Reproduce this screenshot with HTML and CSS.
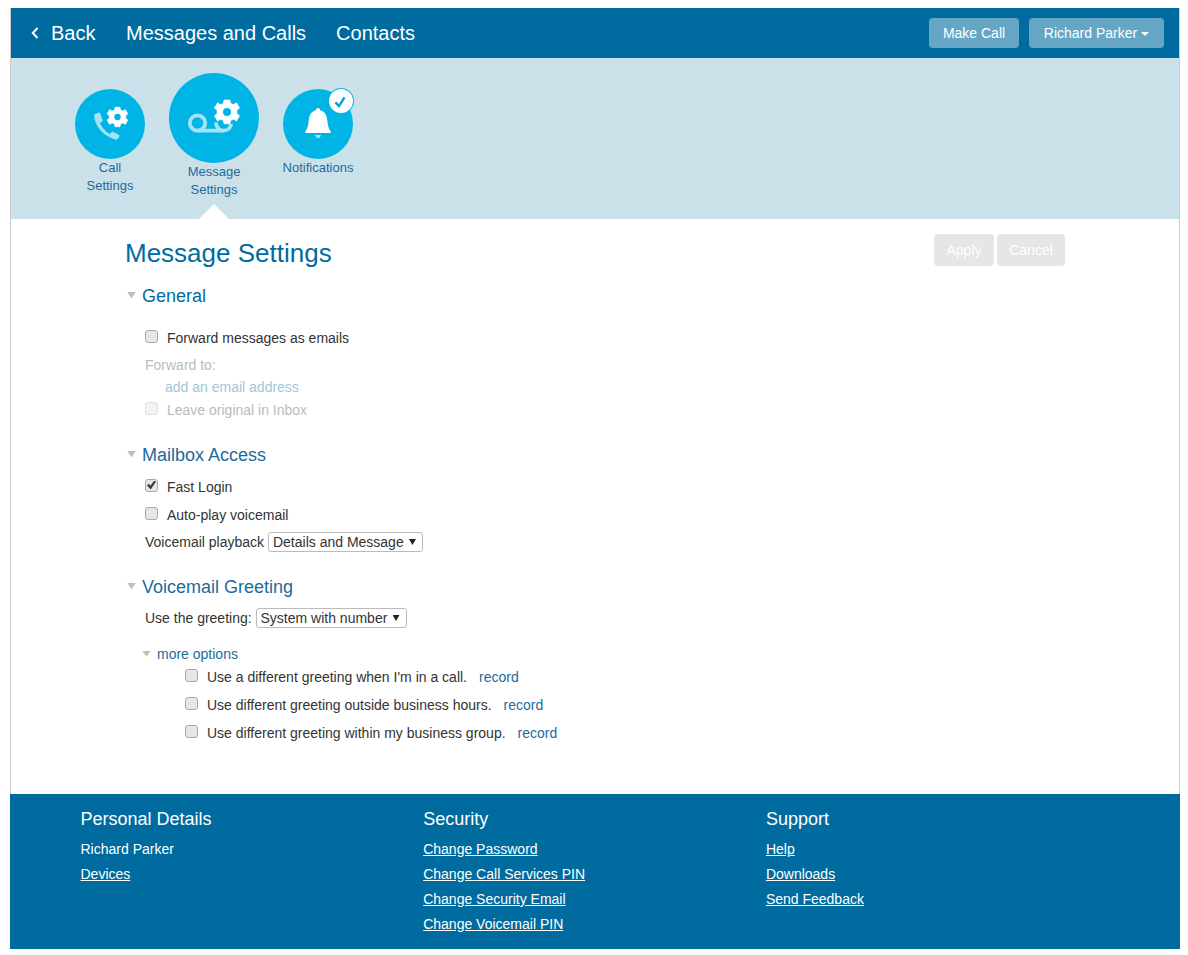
FILE: index.html
```html
<!DOCTYPE html>
<html lang="en">
<head>
<meta charset="utf-8">
<title>Message Settings</title>
<link rel="stylesheet" href="styles.css">
</head>
<body>
<div class="frame">
  <header class="topbar">
    <nav class="topnav">
      <a class="back"><svg class="chev" viewBox="0 0 8 12" width="8" height="12"><path d="M6.500 1 1.800 6l4.700 5" fill="none" stroke="#fff" stroke-width="2"/></svg>Back</a>
      <a class="navlink">Messages and Calls</a>
      <a class="navlink">Contacts</a>
    </nav>
    <div class="topactions">
      <button class="topbtn topbtn-call">Make Call</button>
      <button class="topbtn topbtn-user">Richard Parker<span class="caret"></span></button>
    </div>
  </header>
  <section class="band">
    <div class="tab">
      <div class="circle">
        <svg viewBox="0 0 70 70" width="70" height="70">
          <path d="M19 26c1.500-1.400 3.800-2.300 6-2.500l2.800 8.500-2.900 2.300c2.200 4.500 5.500 8.200 9.800 10.800l2.600-2.600 7.200 3.700c-.3 2.300-1.600 3.900-3.300 4.500C29.500 47.500 19.500 38 19 26z" fill="#a6e2f5"/>
          <g transform="translate(42.500 27.700)"><path class="gear" d="M-2.500-9.500h5l.6 2.800 2.300 1 2.500-1.500 2.500 4.300-2.200 1.900v2.500l2.200 1.900-2.500 4.300-2.500-1.500-2.300 1-.6 2.800h-5l-.6-2.800-2.300-1-2.500 1.500-2.500-4.300 2.200-1.900v-2.500l-2.200-1.900 2.500-4.300 2.500 1.500 2.300-1z"/><circle cx="0" cy=".250" r="3.200" fill="#00b5e6"/></g>
        </svg>
      </div>
      <div class="tablabel">Call<br>Settings</div>
    </div>
    <div class="tab tab-active">
      <div class="circle circle-big">
        <svg viewBox="0 0 90 90" width="90" height="90">
          <g fill="none" stroke="#a6e2f5" stroke-width="3.800"><circle cx="28.500" cy="50" r="7.700"/><path d="M28.500 57.700H54c5 0 8-3 8-7"/><path d="M47 49.500c0 4.500 3 8.200 7 8.200"/></g>
          <g transform="translate(58 39)"><path class="gear" d="M-3-12h6l.7 3.400 2.800 1.200 3-1.900 3.100 5.300-2.700 2.200v3.400l2.700 2.200-3.100 5.300-3-1.900-2.800 1.200-.7 3.400h-6l-.7-3.400-2.800-1.200-3 1.900-3.100-5.300 2.700-2.200v-3.400l-2.700-2.200 3.100-5.300 3 1.900 2.800-1.200z"/><circle cx="0" cy="0" r="4" fill="#00b5e6"/></g>
        </svg>
      </div>
      <div class="tablabel">Message<br>Settings</div>
    </div>
    <div class="tab">
      <div class="circle">
        <svg viewBox="0 0 70 70" width="70" height="70">
          <path d="M35 19c1.200 0 2.100.9 2.100 2.200 4.300 1 6.400 4.300 7 9 .6 4.600.8 8.500 3.400 12 .5.800.4 1.800-.5 1.800H23c-.9 0-1-1-.5-1.800 2.600-3.500 2.800-7.400 3.400-12 .6-4.700 2.700-8 7-9 0-1.300.9-2.200 2.100-2.200z" fill="#fff"/>
          <path d="M32 46h6c-.5 2-1.500 3.200-3 3.200s-2.500-1.200-3-3.200z" fill="#a6e2f5"/>
        </svg>
        <span class="badge"><svg viewBox="0 0 24 24" width="22" height="22"><path d="M6 13.500 9.800 17.500 15.800 8" fill="none" stroke="#00a5d9" stroke-width="2.600"/></svg></span>
      </div>
      <div class="tablabel">Notifications</div>
    </div>
  </section>
  <main class="content">
    <div class="titlerow">
      <h1 class="pagetitle">Message Settings</h1>
      <div class="formactions">
        <button class="ghost ghost-apply">Apply</button>
        <button class="ghost ghost-cancel">Cancel</button>
      </div>
    </div>

    <h2 class="sectionhead head-general"><span class="tri"></span>General</h2>
    <div class="group">
      <label class="row row-first"><input type="checkbox" class="cb"><span>Forward messages as emails</span></label>
      <div class="muted forward">Forward to:</div>
      <a class="addmail">add an email address</a>
      <label class="row muted row-leave"><input type="checkbox" class="cb" disabled><span>Leave original in Inbox</span></label>
    </div>

    <h2 class="sectionhead head-mailbox"><span class="tri"></span>Mailbox Access</h2>
    <div class="group">
      <label class="row row-fast"><input type="checkbox" class="cb" checked><span>Fast Login</span></label>
      <label class="row row-next"><input type="checkbox" class="cb"><span>Auto-play voicemail</span></label>
      <div class="selectrow row-play">Voicemail playback <span class="selectwrap"><select class="sel"><option>Details and Message</option></select></span></div>
    </div>

    <h2 class="sectionhead head-greeting"><span class="tri"></span>Voicemail Greeting</h2>
    <div class="group">
      <div class="selectrow row-greet">Use the greeting: <span class="selectwrap"><select class="sel"><option>System with number</option></select></span></div>
      <div class="more"><span class="tri tri-small"></span><a class="link">more options</a></div>
      <div class="options">
        <label class="row row-opt1"><input type="checkbox" class="cb"><span>Use a different greeting when I'm in a call.</span><a class="link record">record</a></label>
        <label class="row row-next"><input type="checkbox" class="cb"><span>Use different greeting outside business hours.</span><a class="link record">record</a></label>
        <label class="row row-next"><input type="checkbox" class="cb"><span>Use different greeting within my business group.</span><a class="link record">record</a></label>
      </div>
    </div>
  </main>
  <footer class="footer">
    <div class="fcol">
      <h3 class="fhead">Personal Details</h3>
      <div class="fitem">Richard Parker</div>
      <a class="fitem flink">Devices</a>
    </div>
    <div class="fcol">
      <h3 class="fhead">Security</h3>
      <a class="fitem flink">Change Password</a>
      <a class="fitem flink">Change Call Services PIN</a>
      <a class="fitem flink">Change Security Email</a>
      <a class="fitem flink">Change Voicemail PIN</a>
    </div>
    <div class="fcol">
      <h3 class="fhead">Support</h3>
      <a class="fitem flink">Help</a>
      <a class="fitem flink">Downloads</a>
      <a class="fitem flink">Send Feedback</a>
    </div>
  </footer>
</div>
</body>
</html>
```
FILE: styles.css
```css
* { box-sizing: border-box; }
html, body { margin: 0; padding: 0; background: #fff; }
body {
  padding: 8px 8px 6px 10px;
  font-family: "Liberation Sans", Arial, sans-serif;
  font-size: 14px;
  line-height: 20px;
  color: #333;
}
.frame {
  width: 1170px;
  height: 941px;
  border-left: 1px solid #ccc;
  border-right: 1px solid #ccc;
  display: flex;
  flex-direction: column;
}
.topbar {
  height: 50px;
  background: #006b9f;
  display: flex;
  justify-content: space-between;
  align-items: center;
  padding: 0 15px 0 20px;
  flex: none;
}
.topnav { display: flex; align-items: center; color: #fff; font-size: 20px; }
.back { display: flex; align-items: center; width: 95px; font-size: 20px; }
.chev { margin-right: 12px; margin-top: -1px; }
.navlink { margin-right: 30px; }
.topactions { display: flex; gap: 10px; }
.topbtn {
  height: 30px;
  padding: 0;
  border: 0;
  border-radius: 4px;
  background: #66a6c5;
  color: #fff;
  font: 14px/20px "Liberation Sans", Arial, sans-serif;
}
.topbtn-call { width: 90px; }
.topbtn-user { width: 135px; }
.caret {
  display: inline-block;
  margin-left: 4px;
  vertical-align: middle;
  border-top: 4px solid #fff;
  border-left: 4px solid transparent;
  border-right: 4px solid transparent;
}
.band {
  height: 161px;
  background: #cbe1e9;
  position: relative;
  display: flex;
  align-items: flex-start;
  padding-left: 64px;
  flex: none;
}
.tab {
  display: flex;
  flex-direction: column;
  align-items: center;
  width: 70px;
  margin-top: 31px;
  text-align: center;
  color: #1d6b9c;
  font-size: 13px;
  line-height: 18px;
}
.tab-active {
  width: 90px;
  margin: 15px 24px 0 24px;
  position: relative;
  height: 146px;
}
.tab-active::after {
  content: "";
  position: absolute;
  left: 30px;
  bottom: 0;
  border-bottom: 15px solid #fff;
  border-left: 15px solid transparent;
  border-right: 15px solid transparent;
}
.circle {
  width: 70px;
  height: 70px;
  border-radius: 50%;
  background: #00b5e6;
  position: relative;
  flex: none;
}
.circle svg { display: block; }
.circle-big { width: 90px; height: 90px; }
.gear { fill: #fff; stroke: #fff; stroke-width: .6; stroke-linejoin: round; }
.tablabel { white-space: nowrap; }
.badge {
  position: absolute;
  right: 0;
  top: 0;
  width: 24px;
  height: 24px;
  border-radius: 50%;
  background: #fff;
  box-shadow: 0 0 0 1px #00b5e6;
  display: flex;
  align-items: center;
  justify-content: center;
}
.content {
  flex: 1;
  padding: 0 114px;
}
.titlerow {
  display: flex;
  justify-content: space-between;
  align-items: flex-start;
  padding-top: 15px;
  height: 59px;
}
.pagetitle {
  margin: 3px 0 0;
  font-size: 26px;
  line-height: 32px;
  font-weight: 400;
  color: #006b9f;
}
.formactions { display: flex; gap: 3px; }
.ghost {
  height: 32px;
  padding: 0;
  border: 0;
  border-radius: 4px;
  background: #e6e6e6;
  color: #fff;
  font: 14px/20px "Liberation Sans", Arial, sans-serif;
}
.ghost-apply { width: 60px; }
.ghost-cancel { width: 68px; }
.sectionhead {
  margin: 0;
  font-size: 18px;
  line-height: 24px;
  font-weight: 400;
  color: #1d6b9c;
  display: flex;
  align-items: center;
}
.head-general { margin-top: 6px; color: #006b9f; }
.head-mailbox { margin-top: 23px; }
.head-greeting { margin-top: 23px; }
.tri {
  flex: none;
  width: 9px;
  height: 7px;
  margin: 0 6px 2px 2px;
  background: #bfbfbf;
  clip-path: polygon(0 0, 100% 0, 50% 100%);
}
.tri-small { height: 6px; margin: 0 6px 1px -3px; }
.group { padding-left: 20px; }
.row { display: flex; align-items: center; height: 20px; }
.cb {
  appearance: none;
  -webkit-appearance: none;
  margin: -4px 9px 0 0;
  width: 13px;
  height: 13px;
  border: 1px solid #aaa;
  border-radius: 3px;
  background: #e6e6e6;
  flex: none;
  position: relative;
}
.cb:checked::before {
  content: "";
  position: absolute;
  left: 1px;
  top: 1px;
  width: 9px;
  height: 9px;
  background: #3a3a3a;
  clip-path: polygon(0 52%, 20% 36%, 38% 58%, 80% 0, 100% 14%, 40% 100%);
}
.cb:disabled { border-color: #dcdcdc; background: #f3f3f3; }
.muted { color: #bbb; }
.row-first { margin-top: 20px; }
.forward { margin-top: 7px; }
.addmail { display: block; margin-left: 20px; margin-top: 2px; color: #a2c6da; }
.row-leave { margin-top: 3px; }
.row-fast { margin-top: 10px; }
.row-next { margin-top: 8px; }
.selectrow { height: 20px; display: flex; align-items: center; white-space: pre; }
.row-play { margin-top: 7px; }
.row-greet { margin-top: 9px; }
.selectwrap { position: relative; display: inline-block; height: 20px; }
.selectwrap::after {
  content: "";
  position: absolute;
  right: 7px;
  top: 7px;
  width: 7px;
  height: 6px;
  background: #222;
  clip-path: polygon(0 0, 100% 0, 50% 100%);
}
.sel {
  appearance: none;
  -webkit-appearance: none;
  display: block;
  height: 20px;
  padding: 0 18px 0 4px;
  border: 1px solid #bbb;
  border-radius: 3px;
  background: #fff;
  color: #333;
  font: 14px/18px "Liberation Sans", Arial, sans-serif;
}
.more { display: flex; align-items: center; margin-top: 16px; }
.link { color: #1d6b9c; }
.options { padding-left: 40px; }
.row-opt1 { margin-top: 3px; }
.record { margin-left: 12px; }
.footer {
  height: 155px;
  margin: 0 -1px;
  background: #006b9f;
  color: #fff;
  display: flex;
  padding: 13px 0 0 70.500px;
  flex: none;
}
.fcol { width: 342.700px; display: flex; flex-direction: column; align-items: flex-start; }
.fhead { margin: 0 0 8px; font-size: 18px; line-height: 24px; font-weight: 400; }
.fitem { display: block; height: 25px; line-height: 20px; }
.flink { text-decoration: underline; }
```
